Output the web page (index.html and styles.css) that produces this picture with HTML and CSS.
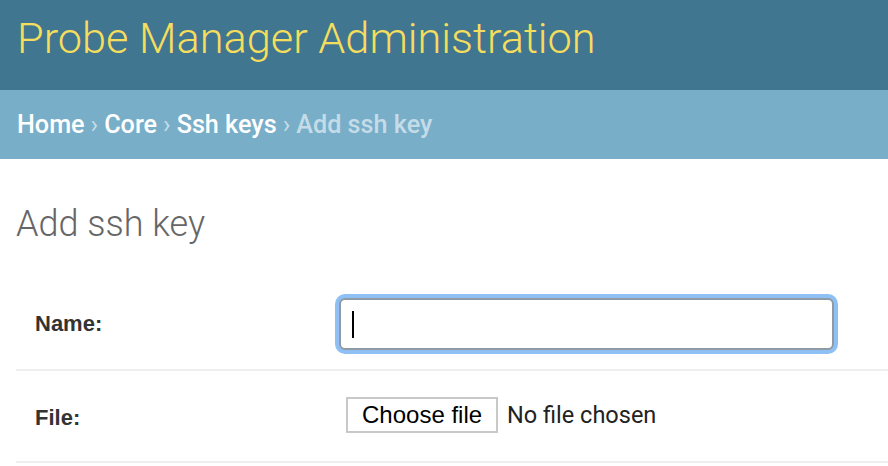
FILE: index.html
```html
<!DOCTYPE html>
<html>
<head>
<meta charset="utf-8">
<link rel="stylesheet" href="styles.css">
</head>
<body>
<header class="header">
  <h1 class="branding">Probe Manager Administration</h1>
</header>
<nav class="breadcrumbs">
  <a href="#">Home</a><span class="sep">›</span><a href="#">Core</a><span class="sep">›</span><a href="#">Ssh keys</a><span class="sep">›</span><span class="current">Add ssh key</span>
</nav>
<main class="content">
  <h1 class="title">Add ssh key</h1>
  <div class="form-row">
    <label class="label">Name:</label>
    <div class="field">
      <div class="text-input"><span class="caret"></span></div>
    </div>
  </div>
  <div class="form-row row-file">
    <label class="label">File:</label>
    <div class="field file-field">
      <span class="file-btn">Choose file</span>
      <span class="file-status">No file chosen</span>
    </div>
  </div>
</main>
</body>
</html>
```
FILE: styles.css
```css
html, body {
  margin: 0;
  padding: 0;
  background: #fff;
  font-family: Roboto, "Liberation Sans", sans-serif;
  overflow: hidden;
}
.header {
  background: #417690;
  height: 90px;
  display: flex;
  align-items: center;
  padding: 0 17px;
  box-sizing: border-box;
}
.branding {
  margin: 0;
  font-weight: 300;
  font-size: 43.3px;
  color: #f5dd5d;
  line-height: 1;
  margin-top: -13px;
}
.breadcrumbs {
  background: #79aec8;
  height: 69px;
  display: flex;
  align-items: center;
  padding: 0 17px;
  box-sizing: border-box;
  font-size: 25.2px;
  color: #c4dce8;
}
.breadcrumbs a {
  color: #fff;
  text-decoration: none;
  font-weight: 500;
}
.breadcrumbs .sep {
  margin: 0 6px;
  color: #c4dce8;
}
.breadcrumbs .current {
  font-weight: 500;
  color: #c4dce8;
}
.content {
  padding: 0 0 0 16px;
}
.title {
  margin: 0;
  padding-top: 47px;
  font-weight: 300;
  font-size: 36px;
  color: #666;
  line-height: 1;
  height: 92px;
  box-sizing: border-box;
}
.form-row {
  display: flex;
  align-items: center;
  border-bottom: 2px solid #eee;
  height: 120px;
  box-sizing: border-box;
  padding-top: 44px;
  padding-bottom: 16px;
}
.row-file {
  height: 92px;
  padding-top: 4px;
  padding-bottom: 0;
}
.label {
  width: 323px;
  padding-left: 19px;
  box-sizing: border-box;
  font-family: "Liberation Sans", Arial, sans-serif;
  font-weight: bold;
  font-size: 22px;
  color: #333;
}
.field {
  display: flex;
  align-items: center;
}
.text-input {
  width: 495px;
  height: 52px;
  box-sizing: border-box;
  border: 2px solid #8f9aa5;
  border-radius: 6px;
  box-shadow: 0 0 0 4px #8ec0f5;
  display: flex;
  align-items: center;
  padding-left: 11px;
  background: #fff;
}
.caret {
  width: 2px;
  height: 27px;
  background: #000;
}
.file-field {
  padding-left: 7px;
  margin-top: -6px;
}
.file-btn {
  font-family: "Liberation Sans", Arial, sans-serif;
  font-size: 24px;
  color: #000;
  border: 2px solid #c8c8c8;
  background: #fff;
  height: 36px;
  box-sizing: border-box;
  display: flex;
  align-items: center;
  padding: 0 14px 0 14px;
}
.file-status {
  font-size: 23.5px;
  color: #222;
  margin-left: 9px;
}
```
